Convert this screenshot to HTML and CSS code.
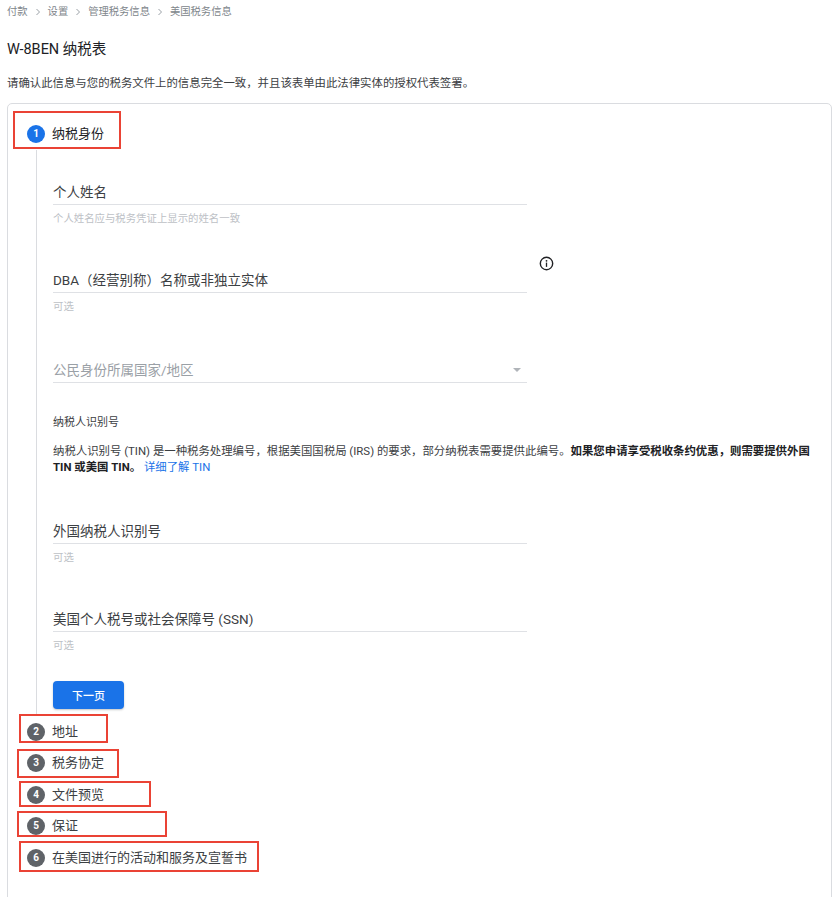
FILE: index.html
```html
<!DOCTYPE html>
<html lang="zh-CN">
<head>
<meta charset="utf-8">
<title>W-8BEN 纳税表</title>
<link rel="stylesheet" href="styles.css">
</head>
<body>
<div class="page">
  <nav class="crumbs">
    <span>付款</span>
    <svg class="chev" viewBox="0 0 6 8" width="6" height="8"><path d="M1.5 1 L4.5 4 L1.5 7" fill="none" stroke="#9aa0a6" stroke-width="1"/></svg>
    <span>设置</span>
    <svg class="chev" viewBox="0 0 6 8" width="6" height="8"><path d="M1.5 1 L4.5 4 L1.5 7" fill="none" stroke="#9aa0a6" stroke-width="1"/></svg>
    <span>管理税务信息</span>
    <svg class="chev" viewBox="0 0 6 8" width="6" height="8"><path d="M1.5 1 L4.5 4 L1.5 7" fill="none" stroke="#9aa0a6" stroke-width="1"/></svg>
    <span>美国税务信息</span>
  </nav>

  <h1 class="title">W-8BEN 纳税表</h1>
  <p class="lead">请确认此信息与您的税务文件上的信息完全一致，并且该表单由此法律实体的授权代表签署。</p>

  <section class="card">
    <div class="step">
      <div class="step-head step-head-first">
        <span class="num num-active">1</span>
        <span class="step-label step-label-active">纳税身份</span>
        <span class="mark mark-1"></span>
      </div>
      <div class="step-body">
        <div class="field-row f-name">
          <div class="field">
            <div class="input">个人姓名</div>
            <div class="hint">个人姓名应与税务凭证上显示的姓名一致</div>
          </div>
        </div>

        <div class="field-row f-dba">
          <div class="field">
            <div class="input">DBA（经营别称）名称或非独立实体</div>
            <div class="hint">可选</div>
          </div>
          <svg class="info" viewBox="0 0 16 16" width="15" height="15">
            <circle cx="8" cy="8" r="6.6" fill="none" stroke="#202124" stroke-width="1.5"/>
            <circle cx="8" cy="5.1" r="0.95" fill="#202124"/>
            <rect x="7.3" y="7" width="1.4" height="4.6" fill="#202124"/>
          </svg>
        </div>

        <div class="field-row f-country">
          <div class="field">
            <div class="input select">
              <span class="placeholder">公民身份所属国家/地区</span>
              <span class="caret"></span>
            </div>
          </div>
        </div>

        <div class="tin">
          <h3 class="tin-title">纳税人识别号</h3>
          <p class="tin-text">纳税人识别号 (TIN) 是一种税务处理编号，根据美国国税局 (IRS) 的要求，部分纳税表需要提供此编号。<b>如果您申请享受税收条约优惠，则需要提供外国 TIN 或美国 TIN。</b> <a class="link" href="#">详细了解 TIN</a></p>
        </div>

        <div class="field-row f-foreign">
          <div class="field">
            <div class="input">外国纳税人识别号</div>
            <div class="hint">可选</div>
          </div>
        </div>

        <div class="field-row f-ssn">
          <div class="field">
            <div class="input">美国个人税号或社会保障号 (SSN)</div>
            <div class="hint">可选</div>
          </div>
        </div>

        <button class="btn" type="button">下一页</button>
      </div>
    </div>

    <div class="step-head">
      <span class="num">2</span><span class="step-label">地址</span><span class="mark mark-2"></span>
    </div>
    <div class="step-head">
      <span class="num">3</span><span class="step-label">税务协定</span><span class="mark mark-3"></span>
    </div>
    <div class="step-head">
      <span class="num">4</span><span class="step-label">文件预览</span><span class="mark mark-4"></span>
    </div>
    <div class="step-head">
      <span class="num">5</span><span class="step-label">保证</span><span class="mark mark-5"></span>
    </div>
    <div class="step-head">
      <span class="num">6</span><span class="step-label">在美国进行的活动和服务及宣誓书</span><span class="mark mark-6"></span>
    </div>
  </section>
</div>
</body>
</html>
```

FILE: styles.css
```css
* { box-sizing: border-box; }

html, body {
  margin: 0;
  padding: 0;
  background: #ffffff;
}

body {
  font-family: Roboto, "Noto Sans CJK SC", "Noto Sans", sans-serif;
  color: #202124;
}

.page {
  padding: 0 2px 0 7px;
}

/* breadcrumb */
.crumbs {
  display: flex;
  align-items: center;
  gap: 7px;
  padding-top: 5px;
  height: 19px;
  font-size: 10.3px;
  line-height: 14px;
  color: #80868b;
}
.chev { display: block; }

.title {
  margin: 21px 0 0;
  font-size: 14.5px;
  line-height: 20px;
  font-weight: 400;
  color: #202124;
}

.lead {
  margin: 15px 0 0;
  font-size: 11.4px;
  line-height: 16px;
  color: #3c4043;
}

/* card */
.card {
  margin-top: 12px;
  border: 1px solid #dadce0;
  border-radius: 5px;
  padding: 14px 0 40px;
}

.step-head {
  position: relative;
  display: flex;
  align-items: center;
  height: 31.5px;
  padding-left: 19px;
}
.step-head-first { height: 32px; }

.num {
  width: 18px;
  height: 18px;
  border-radius: 50%;
  background: #5f6368;
  color: #ffffff;
  font-size: 10px;
  font-weight: 700;
  line-height: 18px;
  text-align: center;
  flex: none;
}
.num-active { background: #1a73e8; }

.step-label {
  margin-left: 7px;
  font-size: 13px;
  line-height: 18px;
  color: #3c4043;
}
.step-label-active { color: #202124; }

/* annotation frames */
.mark {
  position: absolute;
  border: 2px solid #ea4335;
  pointer-events: none;
}
.mark-1 { left: 5px;  top: -7px; width: 108px; height: 38px; }
.mark-2 { left: 11px; top: -2px; width: 89px;  height: 29px; }
.mark-3 { left: 9px;  top: 1px;  width: 102px; height: 29px; }
.mark-4 { left: 11px; top: 2px;  width: 132px; height: 26px; }
.mark-5 { left: 9px;  top: 0;    width: 150px; height: 26px; }
.mark-6 { left: 11px; top: -1px; width: 240px; height: 31px; }

/* step body with the connecting line */
.step-body {
  margin-left: 28px;
  border-left: 1px solid #dadce0;
  padding: 32px 0 7px 16px;
}

.field-row {
  display: flex;
  align-items: flex-start;
}
.field { width: 474px; }

.input {
  font-size: 13.5px;
  line-height: 20px;
  padding-bottom: 2px;
  border-bottom: 1px solid #dfe1e5;
  color: #3c4043;
}
.hint {
  margin-top: 8px;
  font-size: 10.4px;
  line-height: 12px;
  color: #bdc1c6;
}

.f-dba     { margin-top: 45px; }
.f-country { margin-top: 47px; }
.f-foreign { margin-top: 46px; }
.f-ssn     { margin-top: 45px; }

.info {
  flex: none;
  margin: -14px 0 0 12px;
}

.select {
  display: flex;
  align-items: center;
  justify-content: space-between;
}
.placeholder { color: #9aa0a6; }
.caret {
  width: 0;
  height: 0;
  margin-right: 6px;
  border-left: 4px solid transparent;
  border-right: 4px solid transparent;
  border-top: 4px solid #b0b4b9;
}

/* TIN block */
.tin-title {
  margin: 32px 0 0;
  font-size: 11px;
  line-height: 16px;
  font-weight: 400;
  color: #3c4043;
}
.tin-text {
  margin: 12px 0 0;
  max-width: 765px;
  font-size: 11.4px;
  line-height: 16px;
  color: #3c4043;
}
.tin-text b {
  font-weight: 700;
  color: #202124;
}
.link {
  color: #1a73e8;
  text-decoration: none;
}

.btn {
  display: block;
  margin-top: 29px;
  width: 71px;
  height: 28px;
  border: 0;
  border-radius: 4px;
  background: #1a73e8;
  color: #ffffff;
  font-family: Roboto, "Noto Sans CJK SC", sans-serif;
  font-size: 11px;
  font-weight: 500;
  box-shadow: 0 1px 2px rgba(60, 64, 67, 0.3);
  padding: 0;
}
```
